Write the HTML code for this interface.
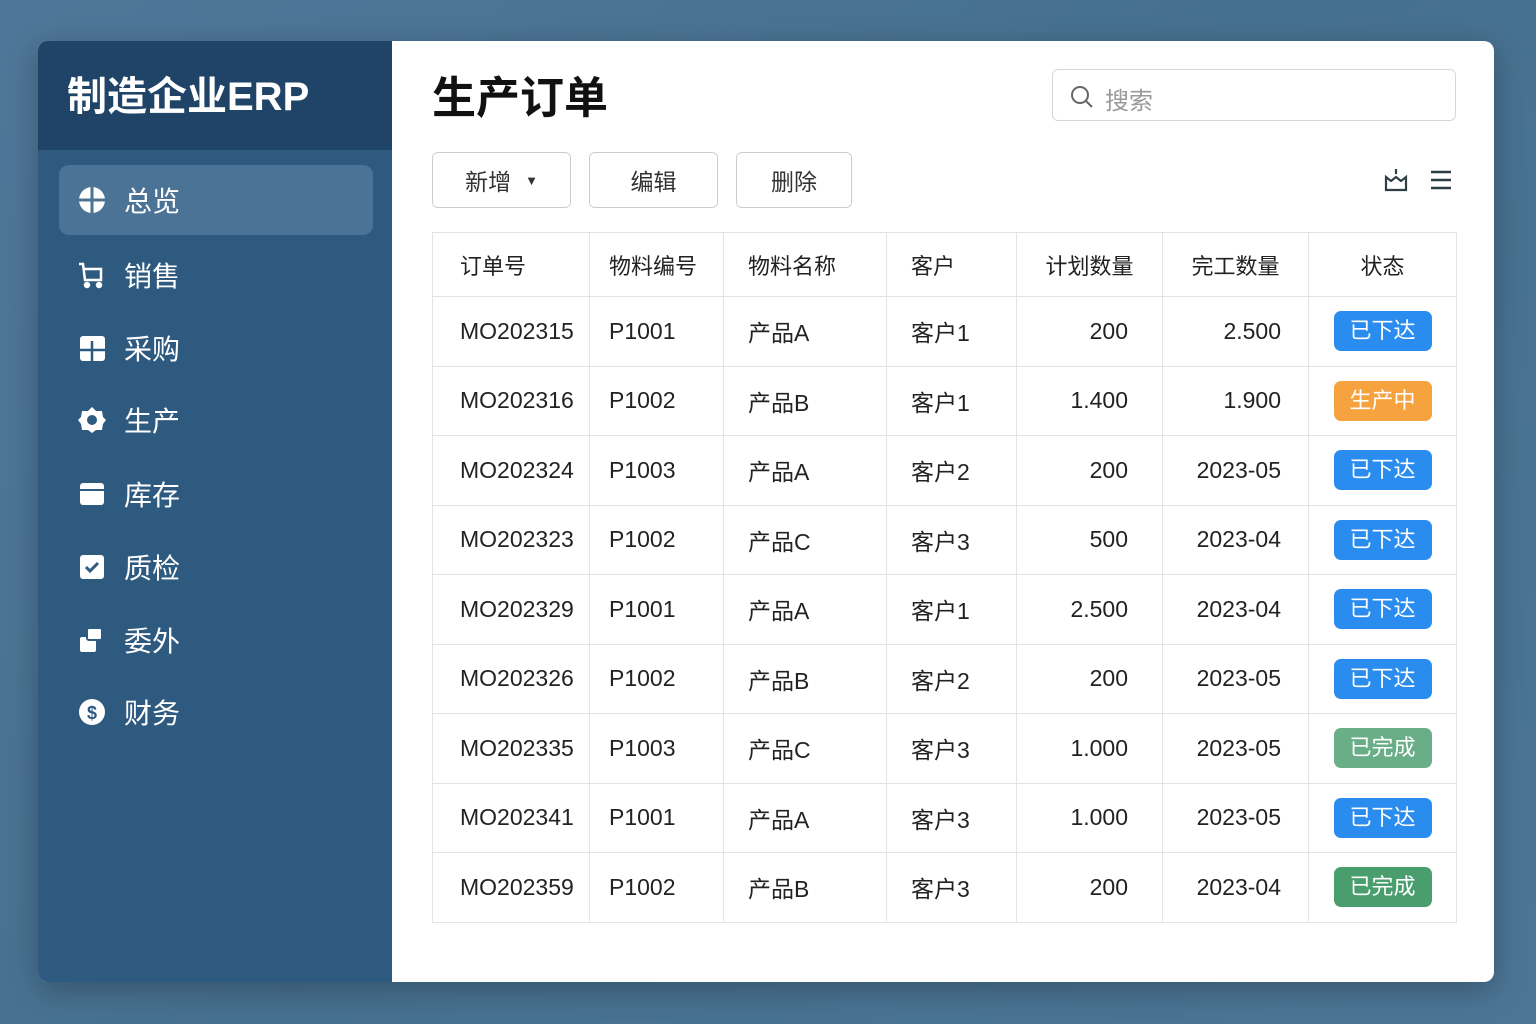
<!DOCTYPE html>
<html><head><meta charset="utf-8"><style>
*{margin:0;padding:0;box-sizing:border-box}
body{width:1536px;height:1024px;background:linear-gradient(135deg,#4f7698,#46708f 50%,#4c7595);font-family:"Liberation Sans","Noto Sans CJK SC",sans-serif;position:relative;overflow:hidden}
.card{position:absolute;left:38px;top:41px;width:1456px;height:941px;border-radius:10px;overflow:hidden;box-shadow:0 8px 30px rgba(0,0,0,.25);background:#fff}
.side{position:absolute;left:0;top:0;width:354px;height:100%;background:#2f5a80}
.logo{height:109px;background:#1f4468;color:#fff;font-size:40px;font-weight:bold;padding:23px 0 0 29px}
.nav{position:absolute;left:21px;width:314px;height:70px;color:#fff;font-size:28px;display:flex;align-items:center}
.nav.act{background:#4b7396;border-radius:10px}
.nav svg{position:absolute;left:18px}
.nav span{position:absolute;left:65px}
.main{position:absolute;left:354px;top:0;right:0;bottom:0}
h1{position:absolute;left:40px;top:21px;font-size:44px;font-weight:bold;color:#111}
.search{position:absolute;left:660px;top:28px;width:404px;height:52px;border:1px solid #d4d8dc;border-radius:6px;color:#999;font-size:24px}
.search span{position:absolute;left:52px;top:11px}
.btn{position:absolute;top:111px;height:56px;border:1px solid #c9cdd2;border-radius:6px;font-size:23px;color:#333;display:flex;align-items:center;justify-content:center;background:#fff}
table{position:absolute;left:40px;top:191px;width:1024px;border-collapse:collapse;font-size:23px;color:#222;table-layout:fixed}
td,th{border:1px solid #e2e5e8;height:69.5px;padding:0 24px;font-weight:normal;text-align:left;white-space:nowrap}
td:first-child,th:first-child{padding-left:27px;padding-right:4px}
td:nth-child(2),th:nth-child(2){padding-left:19px}
td.r:nth-child(5){padding-right:34px}
td.r:nth-child(6){padding-right:27px}
th{height:64px;font-size:22px;color:#222}
.r{text-align:right}
.b{display:inline-block;width:98px;height:40px;border-radius:7px;color:#fff;text-align:center;line-height:40px;font-size:22px}
.bl{background:#2a8cee}.or{background:#f6a23f}.gr{background:#5fa57f}
</style></head><body>
<div class="card">
<div class="side">
<div class="logo">制造企业ERP</div>
<div class="nav act" style="top:124px"><svg width="30" height="30" viewBox="0 0 30 30"><circle cx="15" cy="15" r="13" fill="#fff"/><path d="M15 2v26M2 15h26" stroke="#4b7396" stroke-width="3"/></svg><span>总览</span></div>
<div class="nav" style="top:199px"><svg width="30" height="30" viewBox="0 0 30 30" fill="none" stroke="#fff" stroke-width="2.5"><path d="M2 4h4l2 16h16V9H7"/><circle cx="10" cy="25" r="2" fill="#fff"/><circle cx="22" cy="25" r="2" fill="#fff"/></svg><span>销售</span></div>
<div class="nav" style="top:272px"><svg width="30" height="30" viewBox="0 0 30 30"><rect x="3" y="3" width="25" height="25" rx="3" fill="#fff"/><path d="M15 8v20M3 17h25" stroke="#2f5a80" stroke-width="2.5"/></svg><span>采购</span></div>
<div class="nav" style="top:344px"><svg width="30" height="30" viewBox="0 0 30 30"><path d="M15 2l4 4 6 0 1 6 3 3-3 4-1 6-6 0-4 3-4-3-6 0-1-6-3-4 3-3 1-6 6 0z" fill="#fff"/><circle cx="15" cy="15" r="5" fill="#2f5a80"/></svg><span>生产</span></div>
<div class="nav" style="top:418px"><svg width="30" height="30" viewBox="0 0 30 30"><rect x="3" y="4" width="24" height="22" rx="3" fill="#fff"/><path d="M3 11h24" stroke="#2f5a80" stroke-width="2"/></svg><span>库存</span></div>
<div class="nav" style="top:491px"><svg width="30" height="30" viewBox="0 0 30 30"><rect x="3" y="3" width="24" height="24" rx="3" fill="#fff"/><path d="M9 15l4 4 8-8" stroke="#2f5a80" stroke-width="3" fill="none"/></svg><span>质检</span></div>
<div class="nav" style="top:564px"><svg width="30" height="30" viewBox="0 0 30 30"><rect x="3" y="12" width="16" height="15" rx="2" fill="#fff"/><rect x="10" y="3" width="15" height="12" rx="2" fill="#fff" stroke="#2f5a80" stroke-width="2"/></svg><span>委外</span></div>
<div class="nav" style="top:636px"><svg width="30" height="30" viewBox="0 0 30 30"><circle cx="15" cy="15" r="13" fill="#fff"/><text x="15" y="22" font-size="18" text-anchor="middle" fill="#2f5a80" font-weight="bold" font-family="Liberation Sans">$</text></svg><span>财务</span></div>
</div>
<div class="main">
<h1>生产订单</h1>
<div class="search"><svg style="position:absolute;left:16px;top:14px" width="26" height="26" viewBox="0 0 26 26" fill="none" stroke="#666" stroke-width="2"><circle cx="11" cy="11" r="8"/><path d="M17 17l6 6"/></svg><span>搜索</span></div>
<div class="btn" style="left:40px;width:139px">新增 <span style="font-size:13px;margin-left:14px">▼</span></div>
<div class="btn" style="left:197px;width:129px">编辑</div>
<div class="btn" style="left:344px;width:116px">删除</div>
<svg style="position:absolute;left:991px;top:126px" width="26" height="26" viewBox="0 0 26 26" fill="none" stroke="#2d3e45" stroke-width="2.2"><path d="M3 10l5 4 5-4 5 4 5-4v13H3z"/><path d="M13 2v5"/></svg>
<svg style="position:absolute;left:1037px;top:128px" width="24" height="22" viewBox="0 0 24 22" stroke="#2d3e45" stroke-width="2.4"><path d="M2 3h20M2 11h20M2 19h20"/></svg>
<table>
<colgroup><col style="width:157px"><col style="width:134px"><col style="width:163px"><col style="width:130px"><col style="width:146px"><col style="width:146px"><col style="width:148px"></colgroup>
<tr><th>订单号</th><th>物料编号</th><th>物料名称</th><th>客户</th><th style="text-align:center">计划数量</th><th style="text-align:center">完工数量</th><th style="text-align:center">状态</th></tr>
<tr><td>MO202315</td><td>P1001</td><td>产品A</td><td>客户1</td><td class="r">200</td><td class="r">2.500</td><td style="text-align:center"><span class="b bl">已下达</span></td></tr>
<tr><td>MO202316</td><td>P1002</td><td>产品B</td><td>客户1</td><td class="r">1.400</td><td class="r">1.900</td><td style="text-align:center"><span class="b or">生产中</span></td></tr>
<tr><td>MO202324</td><td>P1003</td><td>产品A</td><td>客户2</td><td class="r">200</td><td class="r">2023-05</td><td style="text-align:center"><span class="b bl">已下达</span></td></tr>
<tr><td>MO202323</td><td>P1002</td><td>产品C</td><td>客户3</td><td class="r">500</td><td class="r">2023-04</td><td style="text-align:center"><span class="b bl">已下达</span></td></tr>
<tr><td>MO202329</td><td>P1001</td><td>产品A</td><td>客户1</td><td class="r">2.500</td><td class="r">2023-04</td><td style="text-align:center"><span class="b bl">已下达</span></td></tr>
<tr><td>MO202326</td><td>P1002</td><td>产品B</td><td>客户2</td><td class="r">200</td><td class="r">2023-05</td><td style="text-align:center"><span class="b bl">已下达</span></td></tr>
<tr><td>MO202335</td><td>P1003</td><td>产品C</td><td>客户3</td><td class="r">1.000</td><td class="r">2023-05</td><td style="text-align:center"><span class="b gr" style="background:#6aae88">已完成</span></td></tr>
<tr><td>MO202341</td><td>P1001</td><td>产品A</td><td>客户3</td><td class="r">1.000</td><td class="r">2023-05</td><td style="text-align:center"><span class="b bl">已下达</span></td></tr>
<tr><td>MO202359</td><td>P1002</td><td>产品B</td><td>客户3</td><td class="r">200</td><td class="r">2023-04</td><td style="text-align:center"><span class="b gr" style="background:#4a9e6e">已完成</span></td></tr>
</table>
</div>
</div>
</body></html>
